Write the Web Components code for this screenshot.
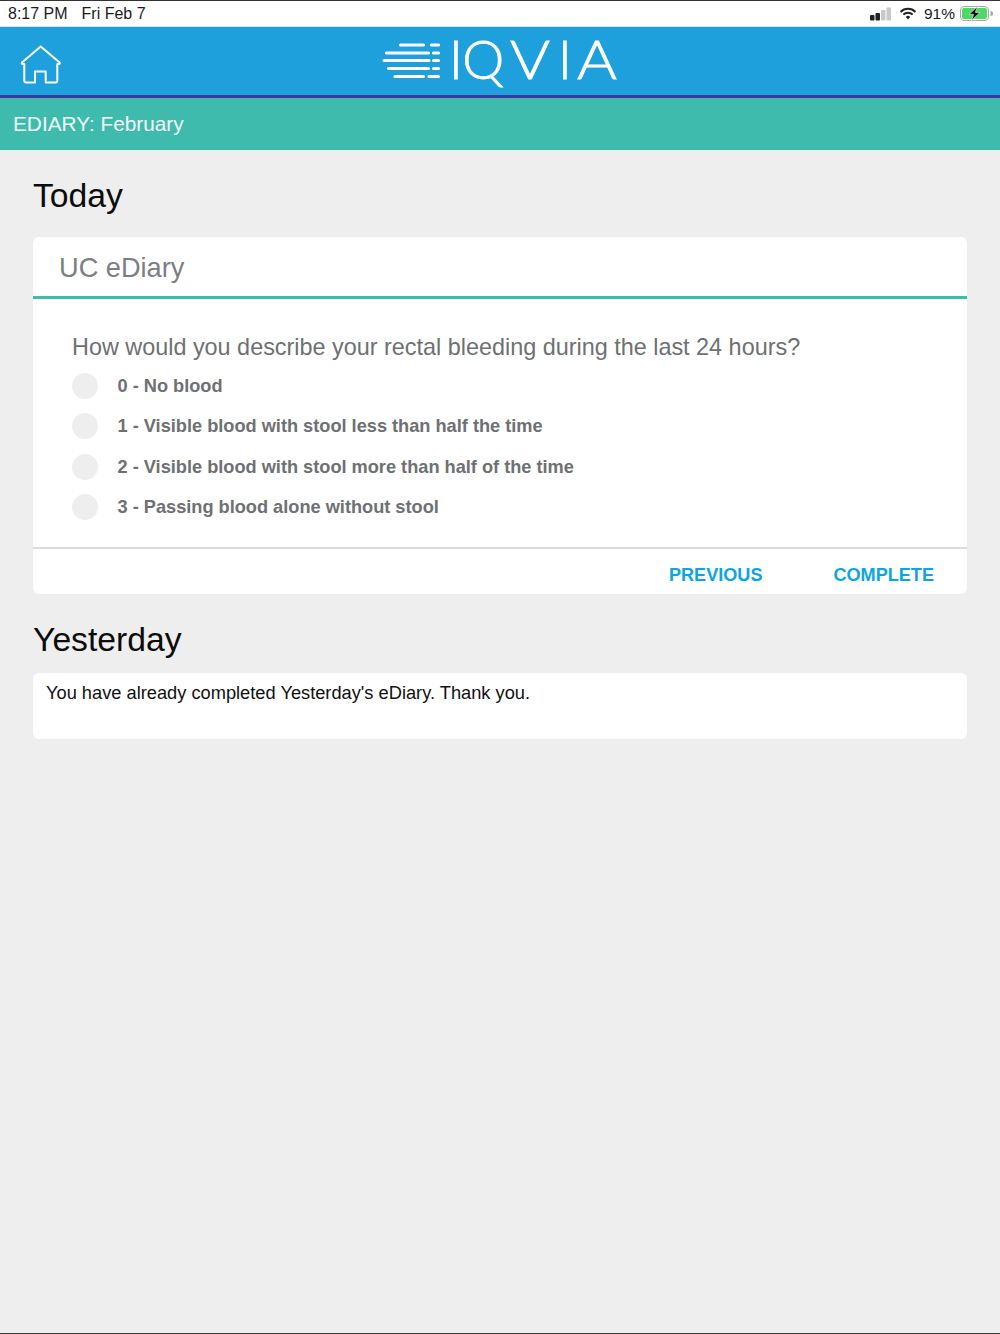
<!DOCTYPE html>
<html lang="en">
<head>
<meta charset="utf-8">
<title>eDiary</title>
<style>
    html, body {
        margin: 0;
        padding: 0;
        height: 1334px;
        overflow: hidden;
        background-color: #eeeeee;
        font-family: "Liberation Sans", Arial, sans-serif;
    }
    body {
        box-sizing: border-box;
        border-bottom: 1px solid #3a3a3a;
    }
</style>
</head>
<body>
<status-bar></status-bar>
<app-header></app-header>
<title-bar>EDIARY: February</title-bar>
<page-content>
    <section-title>Today</section-title>
    <diary-card heading="UC eDiary">
        <question-text>How would you describe your rectal bleeding during the last 24 hours?</question-text>
        <radio-option>0 - No blood</radio-option>
        <radio-option>1 - Visible blood with stool less than half the time</radio-option>
        <radio-option>2 - Visible blood with stool more than half of the time</radio-option>
        <radio-option>3 - Passing blood alone without stool</radio-option>
        <text-button slot="actions" style="margin-right: 71px">PREVIOUS</text-button>
        <text-button slot="actions">COMPLETE</text-button>
    </diary-card>
    <section-title class="second">Yesterday</section-title>
    <note-card>You have already completed Yesterday's eDiary. Thank you.</note-card>
</page-content>

<template id="status-bar-template">
    <style>
        :host {
            display: flex;
            box-sizing: border-box;
            height: 27px;
            align-items: center;
            justify-content: space-between;
            padding: 0 7px 0 8px;
            background-color: #fff;
            border-top: 1px solid #333;
            border-bottom: 1px solid #d5e3ea;
            color: #1c1c1c;
            font-size: 16px;
        }
        .time { display: flex; gap: 14px; }
        .right { display: flex; align-items: center; }
        .pct { font-size: 15.5px; }
        svg { display: block; }
    </style>
    <div class="time"><span>8:17 PM</span><span>Fri Feb 7</span></div>
    <div class="right">
        <svg width="22" height="14" viewBox="0 0 22 14" style="margin-right: 7px">
            <rect x="0" y="8" width="4.5" height="5.5" rx="1" fill="#222"/>
            <rect x="5.5" y="6" width="4.5" height="7.5" rx="1" fill="#222"/>
            <rect x="11" y="3" width="4.5" height="10.5" rx="1" fill="#c9c9c9"/>
            <rect x="16.5" y="0.5" width="4.5" height="13" rx="1" fill="#c9c9c9"/>
        </svg>
        <svg width="18" height="13" viewBox="0 0 18 13" style="margin-right: 7px">
            <path d="M1.5 5 A10.5 10.5 0 0 1 16.5 5" fill="none" stroke="#222" stroke-width="2"/>
            <path d="M4.3 7.6 A6.6 6.6 0 0 1 13.7 7.6" fill="none" stroke="#222" stroke-width="2"/>
            <path d="M6.8 10 A3 3 0 0 1 11.2 10 L9 12.4 Z" fill="#222"/>
        </svg>
        <span class="pct">91%</span>
        <svg width="33" height="15" viewBox="0 0 33 15" style="margin-left: 5px">
            <rect x="0.5" y="0.5" width="28" height="14" rx="3.5" fill="none" stroke="#a8a8a8"/>
            <rect x="2" y="2" width="25" height="11" rx="2" fill="#4cd964"/>
            <path d="M30.5 5 A2.5 2.5 0 0 1 30.5 10 Z" fill="#a8a8a8"/>
            <path d="M17.5 0.5 L9 8.4 H13.5 L11.5 14.5 L20 6.4 H15.4 Z" fill="#111" stroke="#fff" stroke-width="0.6"/>
        </svg>
    </div>
</template>

<template id="app-header-template">
    <style>
        :host {
            display: flex;
            box-sizing: border-box;
            height: 71px;
            position: relative;
            justify-content: center;
            background-color: #1ea0dc;
            border-bottom: 3px solid #3b3a9a;
            color: #fff;
        }
        .home {
            position: absolute;
            left: 20px;
            top: 18px;
        }
        .logo {
            display: flex;
            align-items: flex-start;
        }
        .mark { margin-top: 15px; }
        .word {
            display: flex;
            font-family: Lato, "Liberation Sans", sans-serif;
            font-weight: 300;
            font-size: 53px;
            line-height: 64px;
            margin: 0 0 0 8px;
            width: 169px;
            white-space: nowrap;
            -webkit-text-stroke: 0.8px #fff;
        }
        .word span { display: block; }
        .i1 { margin-right: -0.5px; }
        .q { margin-right: 5.5px; }
        .v { margin-right: 13.5px; transform: scaleX(1.15); transform-origin: left; }
        .i2 { margin-right: 5.5px; }
        .a { transform: scaleX(1.15); transform-origin: left; }
    </style>
    <svg class="home" width="42" height="40" viewBox="0 0 42 40" fill="none" stroke="#fff" stroke-width="2" stroke-linejoin="round" stroke-linecap="round">
        <path d="M20.7 1.5 L39.6 17.6 C40.1 18.3 39.7 19 39 19 H37.3 V35.6 C37.3 37 36.6 37.6 35.3 37.6 H25.7 V26.6 H15 V37.6 H6.3 C5 37.6 4.3 37 4.3 35.6 V19 H2.6 C1.9 19 1.5 18.3 2 17.6 Z"/>
    </svg>
    <div class="logo">
        <svg class="mark" width="59" height="38" viewBox="0 0 59 38" stroke="#fff" stroke-width="3.2" stroke-linecap="round">
            <path d="M18.5 3 H41.5 M49.5 3 H56.5"/>
            <path d="M4.5 11 H46.5 M51.5 11 H56.5"/>
            <path d="M2 18.5 H47 M51.5 18.5 H56.5"/>
            <path d="M6.5 26.5 H46.5 M51.5 26.5 H56.5"/>
            <path d="M13 34.5 H41.5 M47 34.5 H56.5"/>
        </svg>
        <div class="word"><span class="i1">I</span><span class="q">Q</span><span class="v">V</span><span class="i2">I</span><span class="a">A</span></div>
    </div>
</template>

<template id="title-bar-template">
    <style>
        :host {
            display: flex;
            align-items: center;
            box-sizing: border-box;
            height: 52px;
            padding: 0 13px 1px;
            background-color: #3fbbae;
            color: #f2fbfa;
            font-size: 20.8px;
        }
    </style>
    <slot></slot>
</template>

<template id="page-content-template">
    <style>
        :host {
            display: block;
            padding: 0 33px;
        }
    </style>
    <slot></slot>
</template>

<template id="section-title-template">
    <style>
        :host {
            display: block;
            height: 87px;
            padding-top: 25px;
            box-sizing: border-box;
            color: #0c0c0c;
            font-size: 33.7px;
            line-height: 40px;
        }
        :host(.second) {
            height: 79px;
        }
    </style>
    <slot></slot>
</template>

<template id="diary-card-template">
    <style>
        :host {
            display: block;
            height: 357px;
            box-sizing: border-box;
            background-color: #fff;
            border-radius: 6px;
        }
        .heading {
            box-sizing: border-box;
            height: 62px;
            padding: 15px 26px 0;
            border-bottom: 3px solid #3fbbae;
            color: #7c7f80;
            font-size: 27.2px;
            line-height: 32px;
        }
        .body {
            box-sizing: border-box;
            height: 250px;
            padding: 34px 39px 0;
            border-bottom: 2px solid #dddddd;
        }
        .actions {
            display: flex;
            justify-content: flex-end;
            padding: 15px 33px 0 0;
        }
    </style>
    <div class="heading"></div>
    <div class="body"><slot></slot></div>
    <div class="actions"><slot name="actions"></slot></div>
</template>

<template id="question-text-template">
    <style>
        :host {
            display: block;
            height: 28px;
            margin-bottom: 5.4px;
            color: #6d7173;
            font-size: 23.4px;
            line-height: 28px;
            white-space: nowrap;
        }
    </style>
    <slot></slot>
</template>

<template id="radio-option-template">
    <style>
        :host {
            display: flex;
            align-items: center;
            height: 40.34px;
            color: #6d7173;
            font-size: 18.2px;
            font-weight: bold;
        }
        .dot {
            flex: none;
            width: 26px;
            height: 26px;
            margin: -1px 19.5px 0 0;
            border-radius: 50%;
            background-color: #eeeeee;
        }
    </style>
    <span class="dot"></span>
    <slot></slot>
</template>

<template id="text-button-template">
    <style>
        :host {
            display: block;
            color: #0aa6e4;
            font-size: 18.1px;
            font-weight: bold;
            line-height: 22px;
            cursor: pointer;
        }
    </style>
    <slot></slot>
</template>

<template id="note-card-template">
    <style>
        :host {
            display: block;
            box-sizing: border-box;
            height: 66px;
            padding: 9px 13px;
            background-color: #fff;
            border-radius: 6px;
            color: #111;
            font-size: 18.25px;
            line-height: 22px;
        }
    </style>
    <slot></slot>
</template>

<script type="module">
    const define_from_template = (tag, setup) => {
        customElements.define(
            tag,
            class extends HTMLElement {
                constructor() {
                    super();

                    const template_clone = document.getElementById(`${tag}-template`).content.cloneNode(true);

                    this.attachShadow({ mode: "open" }).append(template_clone);
                    if (setup) setup(this);
                }
            },
        );
    };

    define_from_template("status-bar");
    define_from_template("app-header");
    define_from_template("title-bar");
    define_from_template("page-content");
    define_from_template("section-title");
    define_from_template("diary-card", (el) => {
        el.shadowRoot.querySelector(".heading").textContent = el.getAttribute("heading");
    });
    define_from_template("question-text");
    define_from_template("radio-option");
    define_from_template("text-button");
    define_from_template("note-card");
</script>
</body>
</html>
